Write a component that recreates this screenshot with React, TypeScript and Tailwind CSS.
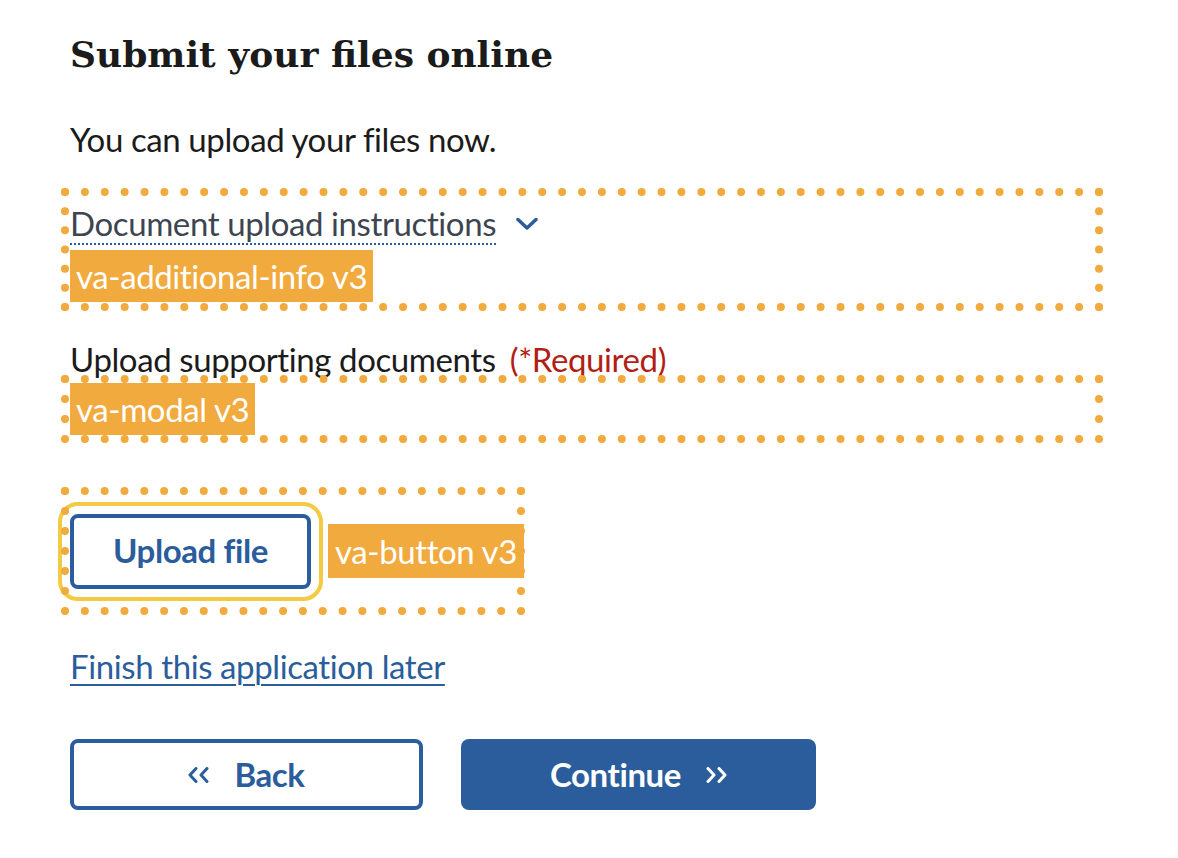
import React from 'react';

const BLUE = '#2b5d9c';

// dotted outline drawn as an overlay, so the dots sit on the box edge
const DotFrame: React.FC<{ cols: number; rows: number }> = ({ cols, rows }) => (
    <svg className="pointer-events-none absolute inset-0 h-full w-full overflow-visible" aria-hidden="true">
        <g stroke="#f1aa3d" strokeWidth={8} strokeLinecap="round" strokeDasharray="0 1" fill="none">
            <line x1="0" y1="0" x2="100%" y2="0" pathLength={cols} />
            <line x1="100%" y1="100%" x2="0" y2="100%" pathLength={cols} />
            <line x1="0" y1="0" x2="0" y2="100%" pathLength={rows} />
            <line x1="100%" y1="0" x2="100%" y2="100%" pathLength={rows} />
        </g>
    </svg>
);

const Tag: React.FC<{ children: React.ReactNode }> = ({ children }) => (
    <span className="inline-flex h-[52px] shrink-0 items-center whitespace-nowrap bg-[#f1aa3d] px-[6px] text-[33px] leading-none tracking-[-0.4px] text-white">
        {children}
    </span>
);

const Chevrons: React.FC<{ dir: 'left' | 'right'; color: string }> = ({ dir, color }) => (
    <svg width="22" height="16" viewBox="0 0 22 16" fill="none" stroke={color} strokeWidth={3} strokeLinecap="round" strokeLinejoin="round">
        {dir === 'left' ? (
            <>
                <polyline points="8,1.5 2,8 8,14.5" />
                <polyline points="19,1.5 13,8 19,14.5" />
            </>
        ) : (
            <>
                <polyline points="3,1.5 9,8 3,14.5" />
                <polyline points="14,1.5 20,8 14,14.5" />
            </>
        )}
    </svg>
);

export default function App() {
    return (
        <div className="min-h-[858px] w-[1178px] bg-white font-['Lato',sans-serif] text-[33px] tracking-[-0.4px] text-[#1b1b1b]">
            <div className="flex w-[1099px] flex-col pl-[65px] pt-[32px]">
                <h1 className="pl-[5px] font-['DejaVu_Serif',serif] text-[36px] font-bold leading-[44px] tracking-normal">
                    Submit your files online
                </h1>

                <p className="mt-[43px] pl-[5px] leading-[40px]">You can upload your files now.</p>

                {/* additional info */}
                <div className="relative mt-[33px] flex h-[115px] flex-col items-start pl-[5px] pt-[11px]">
                    <DotFrame cols={52} rows={6} />
                    <div className="flex items-center gap-[20px]">
                        <span className="border-b-2 border-dotted border-[#2b5d9c] leading-[40px] text-[#3d4551]">
                            Document upload instructions
                        </span>
                        <svg width="22" height="14" viewBox="0 0 22 14" fill="none" stroke={BLUE} strokeWidth={3.5} strokeLinecap="round" strokeLinejoin="round">
                            <polyline points="2,2.5 11,11 20,2.5" />
                        </svg>
                    </div>
                    <div className="mt-[5px]">
                        <Tag>va-additional-info v3</Tag>
                    </div>
                </div>

                <div className="mt-[32px] pl-[5px] leading-[40px]">
                    Upload supporting documents <span className="ml-[6px] text-[#b21e14]">(*Required)</span>
                </div>

                {/* modal */}
                <div className="relative flex h-[60px] items-center pl-[5px]">
                    <DotFrame cols={52} rows={3} />
                    <Tag>va-modal v3</Tag>
                </div>

                {/* button */}
                <div className="relative mt-[52px] flex h-[120px] w-[456px] items-center pl-[5px]">
                    <DotFrame cols={23} rows={6} />
                    <button className="flex h-[75px] w-[241px] shrink-0 items-center justify-center rounded-[8px] border-4 border-[#2b5d9c] bg-white font-bold text-[#2b5d9c] outline-4 outline-offset-[8px] outline-[#f3ca41] outline-solid">
                        Upload file
                    </button>
                    <span className="ml-[17px] inline-flex h-[54px] shrink-0 items-center whitespace-nowrap bg-[#f1aa3d] px-[7px] leading-none text-white">
                        va-button v3
                    </span>
                </div>

                <a href="#" className="mt-[35px] self-start pl-[5px] leading-[40px] text-[#2b5d9c] underline decoration-2 underline-offset-[5px]">
                    Finish this application later
                </a>

                <div className="mt-[53px] flex gap-[38px] pl-[5px]">
                    <button className="flex h-[71px] w-[353px] items-center justify-center gap-[24px] rounded-[8px] border-4 border-[#2b5d9c] bg-white font-bold text-[#2b5d9c]">
                        <Chevrons dir="left" color={BLUE} />
                        Back
                    </button>
                    <button className="flex h-[71px] w-[355px] items-center justify-center gap-[24px] rounded-[8px] bg-[#2b5d9c] font-bold text-white">
                        Continue
                        <Chevrons dir="right" color="#ffffff" />
                    </button>
                </div>
            </div>
        </div>
    );
}
